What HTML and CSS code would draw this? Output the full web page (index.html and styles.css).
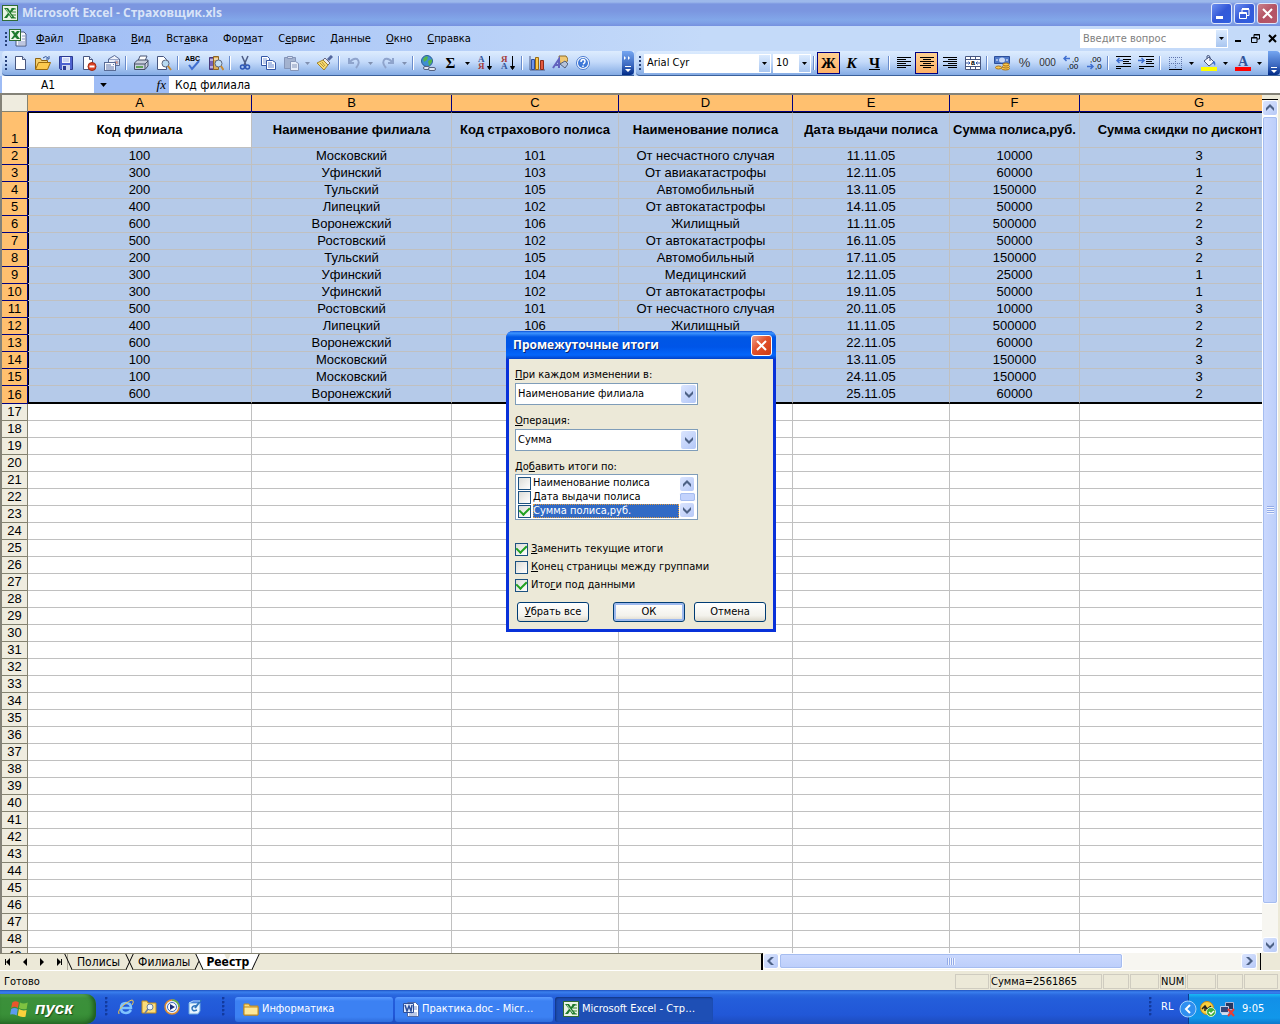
FILE: index.html
```html
<!DOCTYPE html>
<html lang="ru">

<head>
    <meta charset="UTF-8">
    <meta name="viewport" content="width=device-width, initial-scale=1.0">
    <title>Microsoft Excel - Страховщик.xls</title>
    <link rel="stylesheet" href="styles.css">
</head>

<body>

    <!-- Shared icons -->
    <svg class="sprite" aria-hidden="true">
        <symbol id="excel" viewBox="0 0 16 16">
            <rect x="0" y="0" width="16" height="16" fill="#2f6b35"/>
            <rect x="1" y="1" width="14" height="14" fill="#e9f3e4"/>
            <path d="M9 3h5v2H9zM10 6h4v2h-4zM10 9h4v2h-4zM9 12h5v2H9z" fill="#8fbf8a"/>
            <path d="M2 3h4l2 3 2-3h3L9 8l4 5H9L7 10l-2 3H2l4-5z" fill="#1f7a2e"/>
            <path d="M4 4l6 8" stroke="#bfe0b8"/>
        </symbol>
        <symbol id="down" viewBox="0 0 8 8"><path d="M0 1l4 4 4-4v3L4 8 0 4z" fill="#4d6185"/></symbol>
        <symbol id="up" viewBox="0 0 8 8"><path d="M0 7l4-4 4 4V4L4 0 0 4z" fill="#4d6185"/></symbol>
        <symbol id="left" viewBox="0 0 8 8"><path d="M7 0L3 4l4 4H4L0 4l4-4z" fill="#4d6185"/></symbol>
        <symbol id="right" viewBox="0 0 8 8"><path d="M1 0l4 4-4 4h3l4-4-4-4z" fill="#4d6185"/></symbol>
        <symbol id="drop" viewBox="0 0 5 3"><path d="M0 0h5L2.500 3z" fill="currentColor"/></symbol>
        <symbol id="more" viewBox="0 0 8 20">
            <path d="M0 3l2 2-2 2zM4 3l2 2-2 2zM1 13h6v1H1zM1 16h6l-3 3z" fill="#fff"/>
        </symbol>
    </svg>

    <!-- Title bar -->
    <header class="titlebar">
        <svg class="icon"><use href="#excel"/></svg>
        <h1>Microsoft Excel - Страховщик.xls</h1>
        <button class="win-btn" aria-label="Свернуть"><svg viewBox="0 0 19 19"><path d="M4 12h7v3H4z" fill="#fff"/></svg></button>
        <button class="win-btn" aria-label="Восстановить"><svg viewBox="0 0 19 19"><path d="M7 5.500h7v6h-2M7 4.500h7M7 5v3M4.500 8.500h7v6h-7zM4 9.500h8" fill="none" stroke="#fff"/></svg></button>
        <button class="win-btn win-close" aria-label="Закрыть"><svg viewBox="0 0 19 19"><path d="M5 5l9 9M14 5l-9 9" stroke="#fff" stroke-width="2"/></svg></button>
    </header>

    <!-- Menu -->
    <nav class="menubar">
        <span class="grip"></span>
        <svg class="doc-icon" viewBox="0 0 18 18">
            <path d="M7 3h8l2 2v12H7z" fill="#f4f6fd" stroke="#46567f"/>
            <path d="M9 13h7M9 15h7M13 7h3M13 10h3" stroke="#8796c4"/>
            <rect x=".5" y=".5" width="11" height="11" fill="#f0f7ec" stroke="#2f6b35"/>
            <path d="M2 2h3l1 2 2-2h3L8 6l3 4H8L6 8l-2 2H2l3-4z" fill="#1f7a2e"/>
        </svg>
        <button><u>Ф</u>айл</button>
        <button><u>П</u>равка</button>
        <button><u>В</u>ид</button>
        <button>Вст<u>а</u>вка</button>
        <button>Фор<u>м</u>ат</button>
        <button>С<u>е</u>рвис</button>
        <button><u>Д</u>анные</button>
        <button><u>О</u>кно</button>
        <button><u>С</u>правка</button>
        <div class="ask">
            <input type="text" placeholder="Введите вопрос" aria-label="Введите вопрос">
            <button class="combo-drop" aria-label="Список вопросов"><svg><use href="#drop"/></svg></button>
        </div>
        <div class="doc-btns">
            <button aria-label="Свернуть книгу"><svg viewBox="0 0 9 9"><path d="M1 6h6v2H1z"/></svg></button>
            <button aria-label="Восстановить книгу"><svg viewBox="0 0 9 9"><path d="M3 3V.500h5.500V5H6M3 1h6M.5 3.500h5.500v5H.5zM.5 4h5.500" fill="none" stroke="#000"/></svg></button>
            <button aria-label="Закрыть книгу"><svg viewBox="0 0 9 9"><path d="M1 1l7 7M8 1L1 8" stroke="#000" stroke-width="2"/></svg></button>
        </div>
    </nav>

    <!-- Toolbars -->
    <div class="toolbars">
        <div class="toolbar standard">
            <span class="grip"></span>
            <button class="tb" aria-label="Создать"><svg viewBox="0 0 16 16"><path d="M3.500 1.500h7l3 3v10h-10z" fill="#fff" stroke="#47567f"/><path d="M10.500 1.500v3h3" fill="#cfdcf5" stroke="#47567f"/></svg></button>
            <button class="tb" aria-label="Открыть"><svg viewBox="0 0 16 16"><path d="M.5 14V3.500h5l1 2h6V8" fill="#f6d06d" stroke="#8d6414"/><path d="M.5 14.500l3-7h12l-3 7z" fill="#fcc94e" stroke="#9a6a10"/><path d="M8 3q3-3 5 0M14 1v3h-3" fill="none" stroke="#31549a"/></svg></button>
            <button class="tb" aria-label="Сохранить"><svg viewBox="0 0 16 16"><path d="M1.500 1.500h13v13h-12l-1-1z" fill="#4e62cf" stroke="#2b3a91"/><path d="M4 2h8v6H4z" fill="#eef2fe"/><path d="M5 4h6M5 6h6" stroke="#a9b8e8"/><path d="M4 10h8v5H4z" fill="#ccd5ef"/><path d="M5 11h3v4H5z" fill="#2b3a91"/></svg></button>
            <button class="tb" aria-label="Разрешения"><svg viewBox="0 0 16 16"><path d="M2.500 1.500h6l3 3v10h-9z" fill="#fff" stroke="#47567f"/><path d="M8.500 1.500v3h3" fill="#dae4f8" stroke="#47567f"/><circle cx="11" cy="11.500" r="4" fill="#de4326" stroke="#9f2b13"/><path d="M8.500 11.500h5" stroke="#fff" stroke-width="2"/></svg></button>
            <button class="tb" aria-label="Сообщение"><svg viewBox="0 0 16 16"><path d="M4.500 7V4l6-3.500 5 3.500v6.500h-4" fill="#eef2fb" stroke="#596b95"/><path d="M5 4.500h10M11 6h3v3h-3z" fill="#ec9a7c" stroke="#9ba9cc"/><rect x=".5" y="7.500" width="11" height="8" fill="#f7f9fe" stroke="#596b95"/><path d="M2 10h5M2 12h8M2 14h8M9 9.500h1" stroke="#6076ac"/></svg></button>
            <span class="sep"></span>
            <button class="tb" aria-label="Печать"><svg viewBox="0 0 16 16"><path d="M5 6l2-5h7l-2 5" fill="#fff" stroke="#4b5675"/><path d="M1.500 8l3-3h10.500v6l-3 3.500H1.500z" fill="#c9cfdd" stroke="#444e66"/><path d="M1.500 9h10.500l3-3M12 9v5" fill="none" stroke="#444e66"/><path d="M3 11h7v2H3z" fill="#5fa25a"/></svg></button>
            <button class="tb" aria-label="Просмотр"><svg viewBox="0 0 16 16"><path d="M1.500 1.500h6l3 3v10h-9z" fill="#fff" stroke="#47567f"/><circle cx="9.500" cy="8.500" r="3.500" fill="#b9dcf2" stroke="#5a6680"/><path d="M12 11l3 4" stroke="#c98b31" stroke-width="2"/></svg></button>
            <span class="sep"></span>
            <button class="tb" aria-label="Орфография"><svg viewBox="0 0 16 16"><text x="0" y="6" font-size="7" font-weight="bold" font-family="Liberation Sans">ABC</text><path d="M4 10l3 4 7-8" fill="none" stroke="#3f6fd0" stroke-width="2"/></svg></button>
            <button class="tb" aria-label="Справочные материалы"><svg viewBox="0 0 16 16"><path d="M1.500 2.500h4v12h-4z" fill="#7764b6" stroke="#47397a"/><path d="M5.500 1.500h5v13h-5z" fill="#dcae58" stroke="#8c6425"/><path d="M2 5h3M2 12h3M6 4h4" stroke="#fff"/><circle cx="10.500" cy="8.500" r="3.500" fill="#c5e0f4" stroke="#5a6680"/><path d="M13 11l2.500 4" stroke="#c98b31" stroke-width="2"/></svg></button>
            <span class="sep"></span>
            <button class="tb" aria-label="Вырезать"><svg viewBox="0 0 16 16"><path d="M5 1l4 9M11 1L7 10" stroke="#4c5b84" stroke-width="1.500"/><circle cx="5.500" cy="12" r="2" fill="none" stroke="#2c55b5" stroke-width="1.500"/><circle cx="10.500" cy="12" r="2" fill="none" stroke="#2c55b5" stroke-width="1.500"/></svg></button>
            <button class="tb" aria-label="Копировать"><svg viewBox="0 0 16 16"><path d="M1.500 1.500h6l2 2v7h-8z" fill="#fff" stroke="#3457a6"/><path d="M3 4h4M3 6h4M3 8h3" stroke="#7f9bd8"/><path d="M6.500 5.500h6l3 2v7h-9z" fill="#fff" stroke="#3457a6"/><path d="M8 8h4M8 10h6M8 12h6" stroke="#5f82cf"/></svg></button>
            <button class="tb" aria-label="Вставить"><svg viewBox="0 0 16 16"><path d="M1.500 2.500h11v11h-11z" fill="#a3b2cf" stroke="#8595b8"/><path d="M4.500 1.500h5v2h-5z" fill="#d6def0" stroke="#8595b8"/><path d="M7.500 6.500h5l3 2v7h-8z" fill="#e7edf9" stroke="#8595b8"/><path d="M9 10h5M9 12h5" stroke="#8595b8"/></svg></button>
            <button class="drop off" aria-label="Параметры вставки"><svg><use href="#drop"/></svg></button>
            <button class="tb" aria-label="Формат по образцу"><svg viewBox="0 0 16 16"><path d="M15 1l-4 4" stroke="#53679e" stroke-width="3"/><path d="M8 3l5 5-2 2-5-5z" fill="#e8e8ef" stroke="#6b6b80"/><path d="M6 5l5 5-4 5-7-7z" fill="#f7db73" stroke="#a1832c"/><path d="M3 8l4 4M5 7l3 4" stroke="#b79434"/></svg></button>
            <span class="sep"></span>
            <button class="tb" aria-label="Отменить"><svg viewBox="0 0 16 16"><path d="M3 3v5h5M4 7q3-4 7-3 4 3-1 9" fill="none" stroke="#8fa4cc" stroke-width="2"/></svg></button>
            <button class="drop off" aria-label="Список отмены"><svg><use href="#drop"/></svg></button>
            <button class="tb" aria-label="Вернуть"><svg viewBox="0 0 16 16"><path d="M13 3v5H8M12 7Q9 3 5 4q-4 3 1 9" fill="none" stroke="#8fa4cc" stroke-width="2"/></svg></button>
            <button class="drop off" aria-label="Список возврата"><svg><use href="#drop"/></svg></button>
            <span class="sep"></span>
            <button class="tb" aria-label="Гиперссылка"><svg viewBox="0 0 16 16"><circle cx="7" cy="6" r="5.500" fill="#3f8fd2" stroke="#2a5e98"/><path d="M3 4q3-4 5-2l-1 3-3 2zM8 6l4-2v3l-3 4z" fill="#55b548"/><rect x="3.500" y="11.500" width="6" height="3" rx="1.500" fill="#dfe6f3" stroke="#55617f"/><rect x="8.500" y="12.500" width="7" height="3" rx="1.500" fill="#dfe6f3" stroke="#55617f"/></svg></button>
            <button class="tb sigma" aria-label="Автосумма">Σ</button>
            <button class="drop" aria-label="Список функций"><svg><use href="#drop"/></svg></button>
            <button class="tb" aria-label="По возрастанию"><svg viewBox="0 0 16 16"><g font-size="9" font-weight="bold" font-family="Liberation Serif"><text x="1" y="7" fill="#31549a">А</text><text x="1" y="14" fill="#a53a3a">Я</text></g><path d="M12.500 1v12M10.500 11.500h4l-2 3z" stroke="#000"/></svg></button>
            <button class="tb" aria-label="По убыванию"><svg viewBox="0 0 16 16"><g font-size="9" font-weight="bold" font-family="Liberation Serif"><text x="1" y="7" fill="#a53a3a">Я</text><text x="1" y="14" fill="#31549a">А</text></g><path d="M12.500 1v12M10.500 11.500h4l-2 3z" stroke="#000"/></svg></button>
            <span class="sep"></span>
            <button class="tb" aria-label="Мастер диаграмм"><svg viewBox="0 0 16 16"><path d="M1 1v14h15" fill="none" stroke="#4c5b84"/><path d="M2.500 4.500h3v10h-3z" fill="#6d93ea" stroke="#2e4f9d"/><path d="M6.500 2.500h3v12h-3z" fill="#fcc94e" stroke="#9a6a10"/><path d="M11.500 5.500h3v9h-3z" fill="#e4593f" stroke="#8f2a18"/></svg></button>
            <button class="tb" aria-label="Рисование"><svg viewBox="0 0 16 16"><path d="M7 1h7l2 3-2 5H8z" fill="#f0c874" stroke="#8c6c2b"/><path d="M8 9l5 4 3-4-3-3z" fill="#b5c3da" stroke="#53617f"/><path d="M1 13l6-9v9M3 10h5" fill="none" stroke="#6262be" stroke-width="2"/></svg></button>
            <button class="tb" aria-label="Справка Excel"><svg viewBox="0 0 16 16"><circle cx="8" cy="8" r="6.500" fill="#fff" stroke="#4a7bd0"/><circle cx="8" cy="8" r="5" fill="#3e78d8"/><path d="M6 7q0-2.500 2-2.500t2 2Q10 8 8 9M8 10.500v1.500" fill="none" stroke="#fff" stroke-width="1.500"/></svg></button>
            <button class="more" aria-label="Параметры панели"><svg><use href="#more"/></svg></button>
        </div>

        <div class="toolbar format">
            <span class="grip"></span>
            <div class="combo font-name">
                <input type="text" value="Arial Cyr" aria-label="Шрифт">
                <button class="combo-drop" aria-label="Список шрифтов"><svg><use href="#drop"/></svg></button>
            </div>
            <div class="combo font-size">
                <input type="text" value="10" aria-label="Размер">
                <button class="combo-drop" aria-label="Список размеров"><svg><use href="#drop"/></svg></button>
            </div>
            <span class="sep"></span>
            <button class="tb letter on">Ж</button>
            <button class="tb letter italic">К</button>
            <button class="tb letter under">Ч</button>
            <span class="sep"></span>
            <button class="tb" aria-label="По левому краю"><svg viewBox="0 0 16 16"><path d="M1 2.500h14M1 4.500h9M1 6.500h14M1 8.500h9M1 10.500h14M1 12.500h9" stroke="#000"/></svg></button>
            <button class="tb on" aria-label="По центру"><svg viewBox="0 0 16 16"><path d="M1 2.500h14M4 4.500h8M1 6.500h14M4 8.500h8M1 10.500h14M4 12.500h8" stroke="#000"/></svg></button>
            <button class="tb" aria-label="По правому краю"><svg viewBox="0 0 16 16"><path d="M1 2.500h14M6 4.500h9M1 6.500h14M6 8.500h9M1 10.500h14M6 12.500h9" stroke="#000"/></svg></button>
            <button class="tb" aria-label="Объединить"><svg viewBox="0 0 16 16"><path d="M.5 1.500h15v13H.5zM.5 4.500h15M.5 11.500h15M5.500 1.500v3M10.500 1.500v3M5.500 11.500v3M10.500 11.500v3" fill="#fff" stroke="#47567f"/><path d="M1 8h4M15 8h-4M3.500 6.500L5 8 3.500 9.500M12.500 6.500L11 8l1.500 1.500" stroke="#3457a6" fill="none"/><text x="6" y="10" font-size="7" font-weight="bold" font-family="Liberation Sans">a</text></svg></button>
            <span class="sep"></span>
            <button class="tb" aria-label="Денежный формат"><svg viewBox="0 0 16 16"><path d="M.5 1.500h15v7H.5z" fill="#4f79c9" stroke="#2c4f9b"/><ellipse cx="8" cy="5" rx="3" ry="2.500" fill="#c7d8f8"/><path d="M2 5h2M12 5h2" stroke="#fff"/><g fill="#fcc94e" stroke="#a9731a"><ellipse cx="11.500" cy="13.500" rx="4" ry="1.500"/><ellipse cx="12" cy="11.500" rx="3.500" ry="1.500"/><ellipse cx="12" cy="9.500" rx="3" ry="1.500"/><ellipse cx="4.500" cy="12.500" rx="3" ry="1.500"/></g></svg></button>
            <button class="tb num percent">%</button>
            <button class="tb num">000</button>
            <button class="tb" aria-label="Увеличить разрядность"><svg viewBox="0 0 16 16"><path d="M1 3.500h6M3.500 1L1 3.500 3.500 6" fill="none" stroke="#3f6fd0" stroke-width="1.500"/><g font-size="8" font-family="Liberation Sans"><text x="9" y="7">,0</text><text x="4" y="14">,00</text></g></svg></button>
            <button class="tb" aria-label="Уменьшить разрядность"><svg viewBox="0 0 16 16"><path d="M1 11.500h6M4.500 9L7 11.500 4.500 14" fill="none" stroke="#3f6fd0" stroke-width="1.500"/><g font-size="8" font-family="Liberation Sans"><text x="4" y="7">,00</text><text x="9" y="14">,0</text></g></svg></button>
            <span class="sep"></span>
            <button class="tb" aria-label="Уменьшить отступ"><svg viewBox="0 0 16 16"><path d="M1 1.500h15M8 4.500h8M8 6.500h6M8 8.500h8M1 11.500h15M1 13.500h5" stroke="#000"/><path d="M8 5.500H2M4.500 3L2 5.500 4.500 8" fill="none" stroke="#3f6fd0" stroke-width="1.500"/></svg></button>
            <button class="tb" aria-label="Увеличить отступ"><svg viewBox="0 0 16 16"><path d="M1 1.500h15M8 4.500h8M8 6.500h6M8 8.500h8M1 11.500h15M1 13.500h5" stroke="#000"/><path d="M0 5.500h6M3.500 3L6 5.500 3.500 8" fill="none" stroke="#3f6fd0" stroke-width="1.500"/></svg></button>
            <span class="sep"></span>
            <button class="tb" aria-label="Границы"><svg viewBox="0 0 16 16"><path d="M2 2.500h12M2 8.500h12M2.500 2v12M8.500 2v12M14.500 2v12" stroke="#6076ac" stroke-dasharray="1 1"/><path d="M2 14.500h13" stroke="#000"/></svg></button>
            <button class="drop" aria-label="Список границ"><svg><use href="#drop"/></svg></button>
            <button class="tb" aria-label="Цвет заливки"><svg viewBox="0 0 16 16"><path d="M3 6l5-4 5 5-5 4z" fill="#f2f5fd" stroke="#47567f"/><path d="M6 4V1q2-2 3 1v4" fill="none" stroke="#47567f"/><path d="M13 6q2 1 1 5-1-3-3-3z" fill="#3f6fd0"/><path d="M0 12h16v4H0z" fill="#ff0"/></svg></button>
            <button class="drop" aria-label="Список заливок"><svg><use href="#drop"/></svg></button>
            <button class="tb" aria-label="Цвет шрифта"><svg viewBox="0 0 16 16"><text x="3" y="11" font-size="14" font-weight="bold" font-family="Liberation Serif" fill="#31549a">A</text><path d="M0 12h16v4H0z" fill="#f00"/></svg></button>
            <button class="drop" aria-label="Список цветов"><svg><use href="#drop"/></svg></button>
            <button class="more" aria-label="Параметры форматирования"><svg viewBox="0 0 8 20"><path d="M1 14h6v1H1zM1 17h6l-3 3z" fill="#fff"/></svg></button>
        </div>
    </div>

    <!-- Formula bar -->
    <div class="formula-bar">
        <input class="name-box" type="text" value="A1" aria-label="Имя ячейки">
        <button class="name-drop" aria-label="Список имен"><svg><use href="#drop"/></svg></button>
        <button class="fx" aria-label="Вставка функции"><i>fx</i></button>
        <input class="formula" type="text" value="Код филиала" aria-label="Строка формул">
    </div>

    <!-- Sheet -->
    <main class="sheet">
        <div class="grid">
            <table>
                <colgroup>
                    <col class="c-num"><col class="c-a"><col class="c-b"><col class="c-c">
                    <col class="c-d"><col class="c-e"><col class="c-f"><col class="c-g">
                </colgroup>
                <thead>
                    <tr><th class="corner"></th><th>A</th><th>B</th><th>C</th><th>D</th><th>E</th><th>F</th><th>G</th></tr>
                </thead>
                <tbody id="rows"></tbody>
            </table>
        </div>
        <div class="vscroll">
            <span class="split"></span>
            <button class="sb" aria-label="Вверх"><svg><use href="#up"/></svg></button>
            <div class="track"><span class="thumb"></span></div>
            <button class="sb" aria-label="Вниз"><svg><use href="#down"/></svg></button>
        </div>
    </main>

    <!-- Sheet tabs -->
    <div class="tabs-row">
        <div class="tabs">
            <div class="tab-nav">
                <button aria-label="Первый лист"><svg viewBox="0 0 8 8"><path d="M1 1h1v6H1zM6 0v8L2 4z"/></svg></button>
                <button aria-label="Предыдущий лист"><svg viewBox="0 0 8 8"><path d="M6 0v8L2 4z"/></svg></button>
                <button aria-label="Следующий лист"><svg viewBox="0 0 8 8"><path d="M2 0v8l4-4z"/></svg></button>
                <button aria-label="Последний лист"><svg viewBox="0 0 8 8"><path d="M2 0v8l4-4zM6 1h1v6H6z"/></svg></button>
            </div>
            <button class="tab"><span>Полисы</span></button>
            <button class="tab"><span>Филиалы</span></button>
            <button class="tab active"><span>Реестр</span></button>
        </div>
        <div class="hscroll">
            <button class="sb" aria-label="Влево"><svg><use href="#left"/></svg></button>
            <div class="track"><span class="thumb"></span></div>
            <button class="sb" aria-label="Вправо"><svg><use href="#right"/></svg></button>
            <span class="hsplit"></span>
        </div>
    </div>

    <!-- Status bar -->
    <div class="status">
        <span class="ready">Готово</span>
        <span class="cell w34"></span>
        <span class="cell sum">Сумма=2561865</span>
        <span class="cell w26"></span>
        <span class="cell w30"></span>
        <span class="cell w26">NUM</span>
        <span class="cell w30"></span>
        <span class="cell w26"></span>
        <span class="cell w34"></span>
    </div>

    <!-- Taskbar -->
    <footer class="taskbar">
        <button class="start">
            <svg viewBox="0 0 20 20"><path d="M3 4q3-2 6 0L8 9q-3-2-6 0z" fill="#e8552d"/><path d="M10 4q3 2 7 0l-1 6q-4 1-7-1z" fill="#7fc241"/><path d="M2 10q3-2 6 0l-1 6q-3-2-6-1z" fill="#5b9bf0"/><path d="M9 10q3 2 7 1l-1 6q-4 1-7-1z" fill="#fbd13c"/></svg>
            пуск
        </button>
        <span class="dots"></span>
        <div class="quick">
            <button aria-label="Internet Explorer"><svg viewBox="0 0 16 16"><path d="M13 11q-2 3-5 3-5 0-5-5t5-5q5 0 5 5H4" fill="none" stroke="#7fc3ff" stroke-width="2.500"/><path d="M1 15Q-1 11 7 5t8-3q1 1-1 4" fill="none" stroke="#f6c944"/></svg></button>
            <button aria-label="Проводник"><svg viewBox="0 0 16 16"><path d="M1 2h5l1 2h8v10H1z" fill="#fbdc7b" stroke="#c08a1c"/><circle cx="9" cy="8" r="3" fill="#e9f4ff" stroke="#6d7fa0"/><path d="M7 10l-3 4" stroke="#6d7fa0" stroke-width="1.500"/></svg></button>
            <button aria-label="Проигрыватель"><svg viewBox="0 0 16 16"><circle cx="8" cy="8" r="7" fill="#e5ecf8" stroke="#e08b2c" stroke-width="1.500"/><path d="M8 1a7 7 0 0 1 7 7" fill="none" stroke="#5fb54a" stroke-width="1.500"/><circle cx="8" cy="8" r="4.500" fill="#fff" stroke="#3a66bd"/><path d="M6 5l5 3-5 3z" fill="#1b2f78"/></svg></button>
            <button aria-label="Рабочий стол"><svg viewBox="0 0 16 16"><path d="M2 4h11v8l-2 3H2z" fill="#e7f4ff" stroke="#6aa7dc"/><path d="M10 7q-4-1-5 2 0 4 5 2" fill="none" stroke="#2e74bd" stroke-width="1.500"/><path d="M14 1L8 9" stroke="#2e74bd" stroke-width="2"/><path d="M2 4l4-2h7" fill="none" stroke="#b8e0ff"/></svg></button>
        </div>
        <span class="dots"></span>
        <button class="task"><svg viewBox="0 0 16 16"><path d="M1 3h5l1 2h8v9H1z" fill="#fbdc7b" stroke="#c08a1c"/><path d="M1 6h14v8H1z" fill="#fde89a" stroke="#c08a1c"/></svg>Информатика</button>
        <button class="task"><svg viewBox="0 0 16 16"><path d="M4.500 1.500h8l3 3v11h-11z" fill="#fff" stroke="#4c68a8"/><path d="M11 6h3M11 8h3M6 12h8M6 14h8" stroke="#7a94d0"/><path d="M.5 2.500h10v9H.5z" fill="#dfe9fc" stroke="#2c4f9b"/><path d="M2 4l2 6 2-5 2 5 1-6" fill="none" stroke="#2c4f9b" stroke-width="1.500"/></svg>Практика.doc - Micr…</button>
        <button class="task current"><svg><use href="#excel"/></svg>Microsoft Excel - Стр…</button>
        <span class="dots push"></span>
        <span class="lang">RL</span>
        <div class="tray">
            <button class="tray-toggle" aria-label="Скрытые значки"><svg viewBox="0 0 18 18"><circle cx="9" cy="9" r="8" fill="#2f8ff0" stroke="#a5d3fb"/><path d="M11 5L7 9l4 4" fill="none" stroke="#fff" stroke-width="2"/></svg></button>
            <svg viewBox="0 0 16 16"><circle cx="7" cy="7" r="6.500" fill="#fbcf3c" stroke="#c98b16"/><path d="M2 8l3-3 2 3 4-3M5 5v5" fill="none" stroke="#222" stroke-width="1.500"/><circle cx="11" cy="11" r="4.500" fill="#3fae3b" stroke="#d6f3c8"/><path d="M9 11l2 2 3-3" fill="none" stroke="#fff" stroke-width="1.500"/></svg>
            <svg viewBox="0 0 16 16"><path d="M6.500 1.500h8v7h-8z" fill="#27355e" stroke="#aab6d6"/><path d="M1.500 5.500h8v6h-8z" fill="#33457a" stroke="#c6cfe6"/><path d="M3 14h6l1-2H2z" fill="#d5dced"/><path d="M9 8l6 7M15 8l-6 7" stroke="#ee3b30" stroke-width="2"/></svg>
            <span class="clock">9:05</span>
        </div>
    </footer>

    <!-- Subtotals dialog -->
    <form class="dialog" role="dialog" aria-label="Промежуточные итоги">
        <div class="dialog-title">
            <h2>Промежуточные итоги</h2>
            <button type="button" class="dialog-close" aria-label="Закрыть окно"><svg viewBox="0 0 19 19"><path d="M5 5l9 9M14 5l-9 9" stroke="#fff" stroke-width="2"/></svg></button>
        </div>
        <div class="dialog-body">
            <label for="change"><u>П</u>ри каждом изменении в:</label>
            <div class="select">
                <select id="change"><option>Наименование филиала</option></select>
                <span class="arrow"><svg><use href="#down"/></svg></span>
            </div>

            <label for="operation"><u>О</u>перация:</label>
            <div class="select">
                <select id="operation"><option>Сумма</option></select>
                <span class="arrow"><svg><use href="#down"/></svg></span>
            </div>

            <p class="list-label" id="add-label">До<u>б</u>авить итоги по:</p>
            <div class="list" role="group" aria-labelledby="add-label">
                <div class="list-items">
                    <label><input type="checkbox"><span>Наименование полиса</span></label>
                    <label><input type="checkbox"><span>Дата выдачи полиса</span></label>
                    <label class="picked"><input type="checkbox" checked><span>Сумма полиса,руб.</span></label>
                </div>
                <div class="list-scroll">
                    <button type="button" class="sb" aria-label="Список вверх"><svg><use href="#up"/></svg></button>
                    <span class="thumb"></span>
                    <button type="button" class="sb" aria-label="Список вниз"><svg><use href="#down"/></svg></button>
                </div>
            </div>

            <div class="checks">
                <label><input type="checkbox" checked><span><u>З</u>аменить текущие итоги</span></label>
                <label><input type="checkbox"><span><u>К</u>онец страницы между группами</span></label>
                <label><input type="checkbox" checked><span>Ито<u>г</u>и под данными</span></label>
            </div>

            <div class="dialog-btns">
                <button type="button" class="remove"><span><u>У</u>брать все</span></button>
                <button type="button" class="default">ОК</button>
                <button type="button">Отмена</button>
            </div>
        </div>
    </form>

    <script src="script.js"></script>
</body>

</html>
```
FILE: styles.css
```css
* {
    box-sizing: border-box;
}

body {
    margin: 0;
    height: 100vh;
    display: flex;
    flex-direction: column;
    overflow: hidden;
    position: relative;
    background: #ece9d8;
    color: #000;
    font: 11px/16px "DejaVu Sans Condensed", "DejaVu Sans", sans-serif;
}

button,
input,
select {
    font: inherit;
    color: inherit;
    margin: 0;
    padding: 0;
    border: 0;
    background: none;
    border-radius: 0;
}

button {
    white-space: nowrap;
    flex: none;
}

input[type="text"] {
    min-width: 0;
    outline: none;
}

svg {
    display: block;
    flex: none;
    width: 16px;
    height: 16px;
}

h1,
h2,
p {
    margin: 0;
}

.sprite {
    display: none;
}

/* Title bar */
.titlebar {
    display: flex;
    align-items: center;
    gap: 2px;
    height: 26px;
    padding: 0 2px;
    background: linear-gradient(#9db9eb 0, #9db9eb 2px, #7b96e0 4px, #7b96e0 11px, #82a7e9 20px, #7e9fe6 23px, #7590df 26px);
}

.titlebar h1 {
    flex: 1;
    margin-left: 2px;
    font: bold 12px/16px "Open Sans", sans-serif;
    color: #d8e4f8;
}

.win-btn {
    width: 21px;
    height: 21px;
    border: 1px solid #dfe7fa;
    border-radius: 3px;
    background: linear-gradient(135deg, #6d8ff0, #3459d8 50%, #2f5fe0);
}

.win-btn svg,
.dialog-close svg {
    width: 19px;
    height: 19px;
}

.win-close {
    background: linear-gradient(135deg, #c9808a, #b45263 50%, #b5586c);
}

/* Menu */
.menubar {
    display: flex;
    align-items: center;
    height: 25px;
    padding: 0 3px 0 5px;
    background: linear-gradient(90deg, #9ebcf5, #c4daf9 55%);
}

.menubar > button {
    padding: 0 8px 0 7px;
}

.grip {
    flex: none;
    width: 2px;
    height: 14px;
    background: repeating-linear-gradient(#27417a 0, #27417a 2px, transparent 2px, transparent 4px);
}

.doc-icon {
    width: 18px;
    height: 18px;
    margin: 0 2px 2px;
}

.ask {
    display: flex;
    align-items: center;
    width: 148px;
    height: 19px;
    margin: 0 6px 0 auto;
    padding: 1px;
    background: #fff;
}

.ask input {
    flex: 1;
    padding-left: 2px;
}

.ask input::placeholder {
    color: #808080;
    opacity: 1;
}

.combo-drop {
    display: flex;
    align-items: center;
    justify-content: center;
    width: 11px;
    height: 100%;
    background: linear-gradient(#dcebfe, #a9c6f0);
}

.combo-drop svg,
.drop svg {
    width: 5px;
    height: 3px;
}

.doc-btns {
    display: flex;
    gap: 8px;
}

.doc-btns svg {
    width: 9px;
    height: 9px;
}

/* Toolbars */
.toolbars {
    display: flex;
    gap: 2px;
    height: 25px;
    padding-left: 2px;
    background: #c4daf9;
}

.toolbar {
    display: flex;
    align-items: center;
    border-bottom: 1px solid #3b619c;
    border-radius: 4px 0 0 4px;
    background: linear-gradient(#ddecfe, #c4dafa 45%, #84abe4);
}

.toolbar .grip {
    margin: 0 1px 0 3px;
}

.standard {
    flex: none;
    width: 632px;
}

.format {
    flex: 1;
}

.tb {
    width: 23px;
    height: 22px;
    display: flex;
    align-items: center;
    justify-content: center;
}

.tb.on {
    border: 1px solid #000080;
    background: linear-gradient(#ffd091, #fdb066);
}

.sep {
    flex: none;
    width: 6px;
    height: 14px;
    background: linear-gradient(90deg, transparent 2px, #6a8ccb 2px, #6a8ccb 3px, #fff 3px, #fff 4px, transparent 4px);
}

.drop {
    width: 11px;
    height: 22px;
    display: flex;
    align-items: center;
    justify-content: center;
}

.off {
    color: #8090b0;
}

.sigma,
.letter {
    font: bold 15px/20px "Liberation Serif", serif;
}

.italic {
    font-style: italic;
}

.under {
    text-decoration: underline;
}

.num {
    font: 10px/16px "Liberation Sans", sans-serif;
    color: #333;
}

.percent {
    font-size: 13px;
}

.more {
    align-self: stretch;
    width: 12px;
    margin-left: auto;
    padding: 2px;
    border-radius: 0 4px 4px 0;
    background: linear-gradient(#75a6f1, #3b68bf 60%, #002a87);
}

.more svg {
    width: 8px;
    height: 20px;
}

.combo {
    display: flex;
    align-items: center;
    height: 19px;
    margin-left: 2px;
    padding: 1px;
    background: #fff;
}

.combo input {
    flex: 1;
    padding-left: 2px;
}

.font-name {
    width: 127px;
}

.font-size {
    width: 38px;
}

/* Formula bar */
.formula-bar {
    display: flex;
    height: 17px;
    padding-left: 2px;
    background: #9ebcf5;
    font-size: 12px;
}

.name-box {
    width: 92px;
    text-align: center;
}

.formula-bar .name-box,
.formula-bar .formula {
    background: #fff;
}

.name-drop {
    width: 18px;
    display: flex;
    align-items: center;
    justify-content: center;
}

.name-drop svg {
    width: 7px;
    height: 4px;
}

.fx {
    width: 57px;
    padding-right: 3px;
    text-align: right;
    font: 13px/16px "Liberation Serif", serif;
}

.formula {
    flex: 1;
    padding-left: 6px;
}

/* Sheet */
.sheet {
    flex: 1;
    min-height: 0;
    display: flex;
    padding-right: 2px;
    border-top: 2px solid #848278;
    border-left: 2px solid #848278;
}

.grid {
    flex: 1;
    min-width: 0;
    overflow: hidden;
    background: #fff;
}

table {
    width: 1317px;
    table-layout: fixed;
    border-collapse: separate;
    border-spacing: 0;
    font: 13px/16px "Liberation Sans", sans-serif;
}

.c-num { width: 26px; }
.c-a { width: 224px; }
.c-b { width: 200px; }
.c-c { width: 167px; }
.c-d { width: 174px; }
.c-e { width: 157px; }
.c-f { width: 130px; }
.c-g { width: 239px; }

th,
td {
    height: 17px;
    padding: 0;
    text-align: center;
    white-space: nowrap;
    border-right: 1px solid #c0c0c0;
    border-bottom: 1px solid #c0c0c0;
}

thead th {
    font-weight: normal;
    background: #ffc06f;
    border-color: #000080;
}

tbody th {
    font-weight: normal;
    background: #efecdf;
    border-color: #848270;
    vertical-align: bottom;
}

thead .corner {
    background: #efecdf;
    border-color: #848270;
}

.selected th {
    background: #ffc06f;
    border-color: #000080;
}

.selected td {
    background: #b5cae9;
}

.selected td:nth-child(2) {
    box-shadow: inset 1px 0 #000;
}

.first th,
.first td {
    height: 36px;
    font-weight: bold;
}

.first th {
    font-weight: normal;
}

.first td {
    border-top: 1px solid #000;
}

.first td:nth-child(2) {
    background: #fff;
}

.last td {
    border-bottom: 2px solid #000;
}

/* Scroll bars */
.sb {
    display: flex;
    align-items: center;
    justify-content: center;
    width: 16px;
    height: 16px;
    border: 1px solid #fff;
    border-radius: 3px;
    background: linear-gradient(135deg, #dbe5fe, #b7c9f7);
}

.sb svg,
.arrow svg {
    width: 8px;
    height: 8px;
}

.thumb {
    border: 1px solid #fff;
    border-radius: 3px;
    outline: 1px solid #a6bdf0;
    outline-offset: -2px;
}

.vscroll {
    flex: none;
    display: flex;
    flex-direction: column;
    width: 16px;
    background: #f7f6f1;
}

.split {
    height: 5px;
    border-bottom: 1px solid #000;
    background: #ece9d8;
}

.vscroll .track {
    flex: 1;
    padding-bottom: 33px;
}

.vscroll .thumb {
    display: block;
    height: 100%;
    background:
        repeating-linear-gradient(#93abe8 0, #93abe8 1px, #eef3ff 1px, #eef3ff 2px) center / 7px 8px no-repeat,
        linear-gradient(90deg, #cbd9fe, #bccefa);
}

/* Sheet tabs */
.tabs-row {
    display: flex;
    height: 17px;
    padding-right: 2px;
    background: #ece9d8;
}

.tabs {
    flex: none;
    display: flex;
    width: calc(60% - 4px);
    border-top: 1px solid #848270;
    border-right: 2px solid #000;
}

.tab-nav {
    display: flex;
    align-items: center;
    width: 68px;
    border-right: 1px solid #aca899;
}

.tab-nav button {
    width: 17px;
    padding-left: 4px;
}

.tab-nav svg {
    width: 8px;
    height: 8px;
}

.tab {
    position: relative;
    padding: 0 9px;
    font: 12px/16px "DejaVu Sans Condensed", "DejaVu Sans", sans-serif;
}

.tab span {
    position: relative;
    z-index: 1;
}

.tab::before,
.tab::after {
    content: "";
    position: absolute;
    top: 0;
    bottom: 0;
    width: 50%;
    border-bottom: 1px solid #848270;
}

.tab::before {
    left: 0;
    transform: skewX(25deg);
    border-left: 1px solid #000;
}

.tab::after {
    right: 0;
    transform: skewX(-25deg);
    border-right: 1px solid #000;
}

.tabs .active {
    padding: 0 7px;
    font-weight: bold;
}

.active::before,
.active::after {
    background: #fff;
}

.hscroll {
    flex: 1;
    display: flex;
    background: #f7f6f1;
}

.hscroll .track {
    flex: 1;
    padding-right: 23%;
}

.hscroll .thumb {
    display: block;
    height: 16px;
    background:
        repeating-linear-gradient(90deg, #93abe8 0, #93abe8 1px, #eef3ff 1px, #eef3ff 2px) center / 8px 7px no-repeat,
        linear-gradient(#cbd9fe, #bccefa);
}

.hsplit {
    width: 21px;
    border-left: 3px solid #ece9d8;
    background: linear-gradient(90deg, #000 1px, #ece9d8 1px);
}

/* Status bar */
.status {
    display: flex;
    align-items: center;
    gap: 1px;
    height: 20px;
    padding: 3px 2px 1px 4px;
    border-top: 1px solid #fff;
}

.ready {
    flex: 1;
}

.cell {
    height: 15px;
    border: 1px solid #cfccc0;
    line-height: 14px;
}

.sum { width: 112px; }
.w26 { width: 26px; }
.w30 { width: 29px; }
.w34 { width: 34px; }

/* Taskbar */
.taskbar {
    display: flex;
    align-items: center;
    height: 34px;
    color: #fff;
    background: linear-gradient(#1f50be 0, #3a80ee 2px, #2a67de 5px, #245edb 9px, #2157d7 25px, #1d4bbb 34px);
}

.start {
    display: flex;
    align-items: center;
    gap: 4px;
    width: 96px;
    height: 30px;
    align-self: flex-end;
    padding-left: 9px;
    border-radius: 0 10px 10px 0;
    background: linear-gradient(#5fae5d 0, #3c903b 4px, #399038 20px, #2f7c2e 30px);
    box-shadow: inset -3px -1px 4px #1f5c20;
    font: italic bold 17px/20px "Liberation Sans", sans-serif;
    text-shadow: 1px 1px 1px #1b4d1b;
}

.start svg {
    width: 22px;
    height: 22px;
}

.dots {
    flex: none;
    width: 4px;
    height: 20px;
    margin: 0 9px;
    background: radial-gradient(circle at 1px 1px, #123a9e 1px, transparent 2px) 0 0 / 4px 4px;
}

.push {
    margin-left: auto;
    margin-right: 8px;
}

.quick {
    display: flex;
    gap: 7px;
    margin-right: 10px;
}

.task {
    display: flex;
    align-items: center;
    gap: 3px;
    width: 158px;
    height: 25px;
    margin: 4px 2px 0 0;
    padding-left: 8px;
    border-radius: 3px;
    background: linear-gradient(#5c9bff, #3c81f3 4px, #3c81f3 20px, #2f6ddc);
}

.current {
    background: #1e4fb5;
    box-shadow: inset 1px 1px 2px #123580;
}

.lang {
    width: 27px;
}

.tray {
    display: flex;
    align-items: center;
    align-self: flex-end;
    gap: 3px;
    width: 92px;
    height: 30px;
    border-left: 1px solid #0c3d8e;
    background: linear-gradient(#19b9f4 0, #1290e8 4px, #1197ea 24px, #0d78cb);
}

.tray-toggle {
    margin-left: -10px;
}

.tray-toggle svg {
    width: 18px;
    height: 18px;
}

.clock {
    margin-left: 4px;
}

/* Dialog */
.dialog {
    position: absolute;
    top: 331px;
    left: calc(50% - 134px);
    width: 270px;
    border: 3px solid #0831d9;
    border-top: 0;
    border-radius: 7px 7px 0 0;
    background: #ece9d8;
}

.dialog-title {
    display: flex;
    align-items: center;
    justify-content: space-between;
    height: 28px;
    margin: 0 -3px;
    padding: 0 4px 0 7px;
    border-radius: 7px 7px 0 0;
    background: linear-gradient(#0a4fd8 0, #3d95ff 2px, #0057e5 6px, #0055e8 16px, #0466fb 24px, #0342c8 28px);
}

.dialog-title h2 {
    font: bold 12px/16px "Open Sans", sans-serif;
    color: #fff;
    text-shadow: 1px 1px #0a246a;
}

.dialog-close {
    width: 21px;
    height: 21px;
    border: 1px solid #fff;
    border-radius: 3px;
    background: linear-gradient(135deg, #f0a08a, #e2512b 45%, #cf3c14);
}

.dialog-body {
    display: flex;
    flex-direction: column;
    align-items: flex-start;
    padding: 8px 6px 7px;
}

.select {
    position: relative;
    width: 183px;
    height: 22px;
    margin-bottom: 8px;
    border: 1px solid #7f9db9;
    background: #fff;
}

.select select {
    appearance: none;
    width: 100%;
    height: 20px;
    padding-left: 2px;
}

.arrow {
    position: absolute;
    top: 1px;
    right: 1px;
    width: 15px;
    height: 18px;
    display: flex;
    align-items: center;
    justify-content: center;
    border-radius: 2px;
    background: linear-gradient(135deg, #dbe5fe, #b3c7f7);
    pointer-events: none;
}

.list-label {
    line-height: 15px;
}

.list {
    display: flex;
    width: 183px;
    height: 46px;
    padding: 1px;
    border: 1px solid #7f9db9;
    background: #fff;
}

.list-items {
    flex: 1;
}

.list label {
    display: flex;
    align-items: center;
    gap: 2px;
    height: 14px;
    padding-left: 1px;
    line-height: 14px;
}

.list label span {
    flex: 1;
}

.picked span {
    color: #fff;
    background: #316ac5;
    outline: 1px dotted #e09a3e;
    outline-offset: -1px;
}

.list-scroll {
    display: flex;
    flex-direction: column;
    width: 17px;
}

.list-scroll .thumb {
    flex: 1;
    background: #c3d3fd;
}

input[type="checkbox"] {
    appearance: none;
    flex: none;
    width: 13px;
    height: 13px;
    border: 1px solid #1c5180;
    background: linear-gradient(135deg, #dcdcd7, #fff);
    display: flex;
    align-items: center;
    justify-content: center;
}

input[type="checkbox"]:checked::before {
    content: "";
    width: 5px;
    height: 8px;
    margin-bottom: 2px;
    border: solid #21a121;
    border-width: 0 2px 2px 0;
    transform: rotate(45deg);
}

.checks {
    margin: 20px 0 8px;
}

.checks label {
    display: flex;
    align-items: center;
    gap: 3px;
    height: 18px;
}

.dialog-btns {
    display: flex;
    gap: 9px;
    align-self: stretch;
    padding-left: 2px;
}

.dialog-btns button {
    width: 72px;
    height: 20px;
    border: 1px solid #003c74;
    border-radius: 3px;
    background: linear-gradient(#fff, #f3f2ec 70%, #dcd8cb);
}

.dialog-btns .remove {
    margin-right: 15px;
}

.dialog-btns .default {
    box-shadow: inset 0 0 0 2px #9db9ee;
}
```
FILE: script.js
```js
const data = [
    ["Код филиала", "Наименование филиала", "Код страхового полиса", "Наименование полиса", "Дата выдачи полиса", "Сумма полиса,руб.", "Сумма скидки по дисконту,руб."],
    ["100", "Московский", "101", "От несчастного случая", "11.11.05", "10000", "3"],
    ["300", "Уфинский", "103", "От авиакатастрофы", "12.11.05", "60000", "1"],
    ["200", "Тульский", "105", "Автомобильный", "13.11.05", "150000", "2"],
    ["400", "Липецкий", "102", "От автокатастрофы", "14.11.05", "50000", "2"],
    ["600", "Воронежский", "106", "Жилищный", "11.11.05", "500000", "2"],
    ["500", "Ростовский", "102", "От автокатастрофы", "16.11.05", "50000", "3"],
    ["200", "Тульский", "105", "Автомобильный", "17.11.05", "150000", "2"],
    ["300", "Уфинский", "104", "Медицинский", "12.11.05", "25000", "1"],
    ["300", "Уфинский", "102", "От автокатастрофы", "19.11.05", "50000", "1"],
    ["500", "Ростовский", "101", "От несчастного случая", "20.11.05", "10000", "3"],
    ["400", "Липецкий", "106", "Жилищный", "11.11.05", "500000", "2"],
    ["600", "Воронежский", "", "", "22.11.05", "60000", "2"],
    ["100", "Московский", "", "", "13.11.05", "150000", "3"],
    ["100", "Московский", "", "", "24.11.05", "150000", "3"],
    ["600", "Воронежский", "", "", "25.11.05", "60000", "2"]
];

const rowCount = 49;
const columnCount = 7;
const rows = document.getElementById("rows");

// Filled rows first, the rest of the sheet stays empty
for (let i = 0; i < rowCount; i++) {
    const tr = document.createElement("tr");
    if (i < data.length) tr.classList.add("selected");
    if (i === 0) tr.classList.add("first");
    if (i === data.length - 1) tr.classList.add("last");

    const th = document.createElement("th");
    th.textContent = i + 1;
    tr.appendChild(th);

    for (let j = 0; j < columnCount; j++) {
        const td = document.createElement("td");
        td.textContent = data[i] ? data[i][j] : "";
        tr.appendChild(td);
    }
    rows.appendChild(tr);
}
```
